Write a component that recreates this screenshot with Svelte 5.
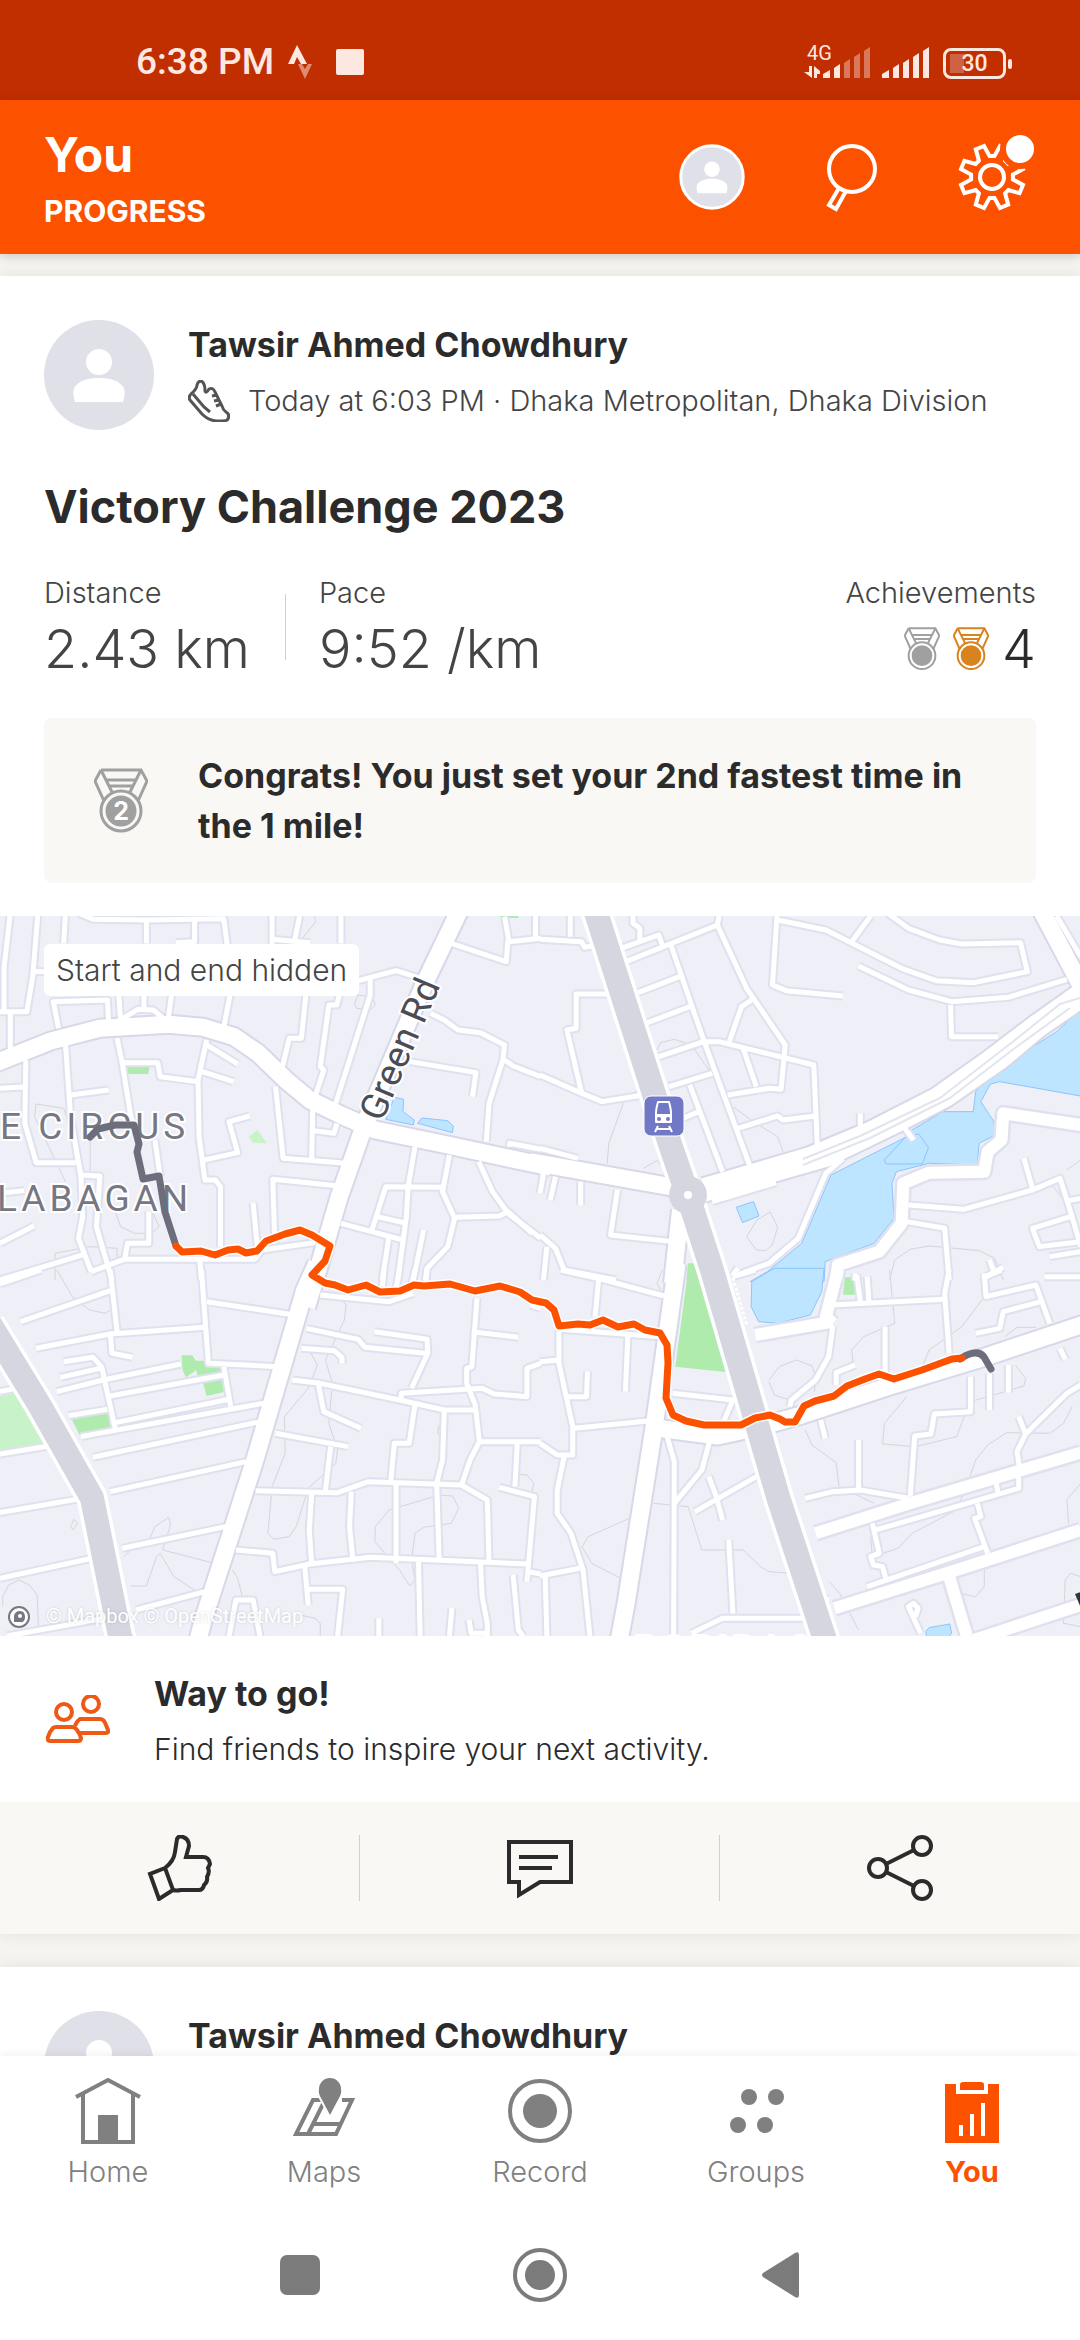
<script lang="ts">
    type Tile = {
        x: number;
        y: number;
        parks?: string[];
        pale?: string[];
        water?: string[];
        paths?: string[];
        minor: string[];
        street?: string[];
        main?: string[];
    };

    const athlete = "Tawsir Ahmed Chowdhury";

    const tabs = [
        { id: "home", label: "Home" },
        { id: "maps", label: "Maps" },
        { id: "record", label: "Record" },
        { id: "groups", label: "Groups" },
        { id: "you", label: "You" },
    ];
    let current = $state("you");

    // eight teeth around the hub
    const gear = Array.from({ length: 8 }, (_, i) => i * 45 + 22.5)
        .flatMap((a) => [[a - 16, 21], [a - 8, 32], [a + 8, 32], [a + 16, 21]])
        .map(([a, r]) => {
            const t = (a * Math.PI) / 180;
            return `${(38 + r * Math.cos(t)).toFixed(1)},${(38 + r * Math.sin(t)).toFixed(1)}`;
        })
        .join(" ");

    // each tile covers 540x370 map units and has its own finer grid
    const tiles: Tile[] = [
        {
            x: 0,
            y: -6,
            parks: ["M368 468H435L430 492H372Z", "M1450 14H1505V24H1455Z"],
            pale: ["M722 680L748 660 775 700 735 698Z"],
            water: [
                "M1120 628L1145 562 1172 568 1170 605 1203 630 1200 645Z",
                "M1213 640L1225 624 1300 632 1316 648 1314 668Z",
            ],
            paths: [
                "M105 582L185 595 200 640 M105 582L100 620 190 815",
                "M262 690V800 M330 890L350 950 390 970 440 970 462 950 440 900",
                "M160 1110V1030L260 1010 340 1015V1060",
                "M1030 280L1040 255 1080 262 1090 285 1075 300 1035 295Z",
                "M910 10L917 35 870 95",
            ],
            minor: [
                "M30 10L12 170V300", "M110 10L95 200 78 305H0", "M190 10L185 100", "M30 305V420", "M95 185H140",
                "M230 10L270 28 430 30 650 26 660 110", "M425 30V100", "M565 20V95L510 98", "M790 18V110",
                "M870 18L855 95 M790 88L900 98", "M990 18V100", "M170 355L155 275 312 270 315 330",
                "M345 255L350 330 400 298 445 300 480 330", "M418 255V298", "M498 255L488 330", "M668 255L650 350",
                "M888 255L875 385H840L820 470", "M985 255L978 285H955L930 470 940 480 915 560",
                "M1075 200V255L975 580", "M1030 215L1150 182 1220 205", "M1310 100L1470 155 1475 90",
                "M1465 20L1478 95 1570 85", "M1555 18V80", "M1250 310L1290 330 1330 360 1395 368 1465 405 1460 450 1420 580 1412 695",
                "M1465 450L1490 468 1570 500", "M1190 455L1382 488 1372 560", "M1480 710V700L1570 718",
                "M190 400L205 620 235 800 240 920 228 985 265 1085", "M340 385L355 460 380 620 400 670",
                "M355 458H458L465 500 575 515", "M600 390L575 510 578 680 595 810H625L640 830V1010",
                "M600 405L690 462", "M578 482L678 515", "M205 555L315 540", "M0 535L80 530",
                "M75 450L72 640 105 758H220", "M725 618L665 635 690 728 585 752", "M800 530L822 745 1005 760",
                "M908 600L905 745", "M910 662L970 670 978 640", "M985 828L792 808 798 1000",
                "M735 880L748 1020", "M228 795L290 798 280 950 325 1110", "M450 690L465 800", "M432 905V1000H370L362 1050",
                "M0 1000L98 948", "M0 1110L240 1035", "M265 1085L360 1048H740L760 1020 915 998", "M580 1050L585 1110",
                "M1205 710L1185 830 1180 920 1155 1110", "M1305 735L1285 845 1320 925 1300 1010 1240 1075 1235 1110",
                "M1080 960L1120 830 1285 832", "M1320 922L1450 918 1475 905 1545 970", "M1390 755L1430 845 1475 910 1570 985",
                "M990 940L1170 990", "M1095 920L1180 940", "M1130 975L1110 1110", "M1230 960L1200 1110", "M0 850L70 842",
            ],
            main: [
                "M-20 462L150 392 290 355 490 343 590 352 680 380 750 430 830 510 900 570 1000 620 1090 660 1300 705 1600 772",
                "M1335 0L1235 215 1060 640 985 860 920 1090 890 1190",
            ],
        },
        {
            x: 540,
            y: -6,
            parks: ["M430 1060H460L480 1110H425Z", "M885 1104H915V1112H885Z"],
            water: [
                "M1580 300L1555 312 1500 365 1310 490 1265 545 1258 605H1170L1080 660 1000 750 1005 762H1110L1128 712 1100 672 1065 680 845 795 760 1000 660 1085 610 1115 825 1115 828 1055 970 1000 1028 925 1022 820 1035 785 1130 760 1270 765 1275 700 1322 675 1318 635 1280 575 1308 522 1335 515 1580 560Z",
                "M570 892L620 875 636 918 588 938Z",
            ],
            paths: [
                "M340 420L350 398 390 388 440 405 490 480", "M290 535L245 570 200 700 195 760",
                "M560 590L620 635 690 680 706 725", "M630 930L668 906 690 950 675 1005 655 1022 628 1020 600 980 630 930",
                "M1015 1110L1030 1050 1075 1018 1130 1008 1275 1022 1320 1045 1345 1110", "M300 775L340 752 370 780",
                "M1500 800L1490 830 1530 880 M1570 750L1530 780",
            ],
            minor: [
                "M0 88L120 95 130 112 150 108", "M88 18V80", "M205 252H105V355L78 360 120 545", "M0 495L110 545 180 575 300 555",
                "M270 18V40L290 55V90", "M235 115L345 75 355 105", "M250 155L515 45 520 18",
                "M380 105L475 390 610 770", "M515 45L600 235 712 405 700 538 665 535 545 555",
                "M285 248L405 200", "M312 338L435 290", "M345 440L475 395 520 395 795 465 805 705",
                "M375 530L500 490", "M550 395L585 290 615 270", "M590 415L628 530", "M435 525L530 785", "M415 625L462 605",
                "M575 655L690 618 705 630 800 618", "M688 18L675 225 715 242 880 258", "M690 30L830 60 1050 175 1150 212 1260 218 1415 185 1395 98 1225 102 1160 90 1070 55 1010 10",
                "M905 95L960 18", "M925 168L1070 240 1195 275 1360 262 1530 208", "M1192 285L1195 380H1330",
                "M0 715L110 745", "M10 790L0 850", "M45 800L30 870", "M118 815V885", "M225 840L205 975 385 995",
                "M0 975L45 1015 70 1080 220 1110", "M20 1010L10 1110", "M500 875L685 818", "M630 800V830",
                "M880 745L830 790 750 985 665 1060 560 1100", "M930 610V650", "M1055 650L1085 690",
                "M1070 885L1230 898 1430 840 1510 805 1545 920 1570 1010", "M1405 745L1430 835", "M1065 935L1175 955 1188 1110",
                "M1540 920L1430 955 1450 1010 1570 995", "M1480 1040L1570 1025", "M1305 1050L1318 1085 M1345 1072L1285 1105",
                "M1535 872L1570 865", "M1500 18L1570 140", "M915 1090V1112", "M560 1095L575 1075",
            ],
            street: [
                "M1570 645L1345 610 1340 690 1300 725 1290 785 1130 788 1055 820 1050 940 985 1025 865 1065 860 1110",
            ],
            main: [
                "M-30 755L390 832",
                "M475 830L780 738 960 660 1150 560 1300 450 1440 340 1590 230",
                "M475 850L830 745 1040 640 1180 565 1340 450 1450 355 1590 255",
                "M1455 0L1550 185 1590 265",
                "M408 900L385 1120",
            ],
        },
        {
            x: 0,
            y: 354,
            parks: [
                "M208 448L315 425 320 478 232 496Z", "M527 256H558L568 272H600L605 290 640 290V312L575 325 570 300 540 322 530 300Z",
                "M590 340L645 330 650 366 600 378Z",
            ],
            pale: ["M0 378L72 366 150 515 0 540Z"],
            paths: [
                "M165 0L210 80 260 120 305 130 320 120", "M930 75H980L1005 105 1000 150 945 270 965 340 955 460 980 540 975 580 895 655 860 770 840 800 795 808 778 790 790 650 828 550 826 440 895 355 922 285 900 245",
                "M1260 680L1130 720 1090 770 1088 815 1160 900 1190 948 1205 930 1195 870 1205 790 1230 772 1310 760 1332 715 1315 678 1260 675",
                "M380 948H425L455 860 465 850 505 920 575 968", "M435 805L450 770 490 742 495 765 472 840 615 878", "M360 860L380 840",
                "M8 1010V980L25 945 55 930 85 945 108 975 112 1080", "M205 770L215 748 225 760 212 780Z", "M675 900L690 925 705 985",
                "M870 1035L915 1045 930 1060V1100", "M1275 465L1270 490 1280 500 M1500 612L1530 615 1550 640 1545 665",
            ],
            minor: [
                "M0 42L120 0", "M60 155L320 62", "M320 0L340 185 M320 185L325 250 385 262", "M585 0L605 280 810 290",
                "M600 95L855 135", "M105 235L320 192 595 172", "M0 365L70 350", "M165 365L300 330 525 282", "M320 378L650 315",
                "M185 275L270 262 295 290 335 478", "M175 322L290 295", "M200 437L312 418", "M335 458L665 388", "M650 290L670 410",
                "M235 500L775 398", "M270 562L755 455", "M0 552L160 525", "M320 665L715 575", "M0 728L240 685", "M355 835L655 770",
                "M0 925L280 862", "M395 1020L595 965", "M20 1098L330 1040", "M890 175L1040 208 1060 232 1235 250",
                "M1088 185L1240 208 1242 250 1195 355", "M875 235L970 242 993 262V280", "M848 330L930 340 1160 390 1290 420H1380",
                "M925 345L940 425 1048 475", "M800 490L1010 530", "M960 530L945 660", "M742 662L980 668 1070 635 1340 645",
                "M1385 85L1370 290 1355 295V340L1380 405 1392 515 1365 570 1340 645 1415 690 1420 880", "M1370 185L1505 202",
                "M1165 390V370L1400 355 1435 372 1530 380V295L1570 280", "M1205 405L1188 520H1145L1135 630", "M1290 425L1285 570 1268 640 1275 865",
                "M1392 515H1570", "M1502 520L1495 650", "M1450 652L1552 680 1530 935", "M1150 640V880", "M1020 665L1015 770 1025 875",
                "M905 670L898 780 905 880", "M685 840L792 850 798 905 900 882 1075 862 1530 882", "M1530 905L1570 912",
                "M885 890L895 1005", "M895 958H995L980 1100", "M1215 875L1220 1100", "M1395 880L1400 980 1415 1060V1100",
                "M1490 915L1505 1080 1520 1100", "M665 1100L685 990H735L755 1100", "M1100 1045V1100", "M1312 1015L1305 1100",
                "M1362 1050L1368 1090H1415", "M930 75L1130 95 1200 70 M1540 105L1570 115", "M1115 0L1110 50", "M1160 0L1150 55", "M1205 0L1195 45 M1240 0L1235 45",
            ],
            main: ["M920 -20L885 60 740 570 590 1050 570 1130"],
        },
        {
            x: 540,
            y: 354,
            parks: ["M430 0H470L510 110 560 308 393 290Z", "M885 22H915V74H880Z"],
            water: [
                "M680 -5L615 35 613 110 635 155 690 160 785 135 818 65 825 -5Z",
                "M1125 1110L1120 1085 1130 1073 1190 1062 1195 1090 1180 1110Z",
            ],
            paths: [
                "M665 330L695 290 745 270 790 288 800 320 797 365", "M665 335L680 375 720 388", "M1015 0L1030 160 940 200 905 240 910 290",
                "M1290 80L1225 170 1130 240 1110 290", "M1065 380L1000 460 995 522 1090 530 1210 500 1235 430",
                "M1380 285L1410 325 1405 348 1260 392", "M770 480L790 525 860 578 868 650", "M330 700L430 710 470 840H590L640 890 665 905 730 910",
                "M260 745L140 800 122 830 150 880 235 925", "M1245 630L1265 570 1300 525 1355 488 1480 490 1520 460 1545 410",
                "M960 800L965 860 1040 835 1080 790 1210 720 1245 630", "M840 935L870 970 925 1080", "M1290 900V950L1265 980 1225 972",
                "M1570 640L1530 690 1535 760", "M1570 920L1540 910 1525 930 1520 1060 1570 1070", "M1350 200L1385 172H1440",
                "M870 650L930 680 970 700", "M355 70L340 40 355 0 M425 40L465 15",
            ],
            minor: [
                "M60 0L180 28 360 78", "M170 30L160 140", "M55 180L55 280 95 470 95 555H50L0 520", "M70 560L50 660V730L90 790 125 900 145 1100",
                "M0 275L55 270", "M75 380H135L138 305", "M255 200L248 365", "M100 475L320 452", "M0 918L115 895", "M15 915L20 1100",
                "M60 178L350 200", "M385 370L560 390 535 450", "M365 485L390 575 388 1100", "M492 515L470 600 390 700",
                "M450 725L645 610", "M490 620L512 680 530 750", "M548 810L560 1030", "M440 1090L530 1045 770 1045",
                "M845 105L1175 88", "M920 15L930 95", "M950 20L955 95", "M1188 0L1175 70 1188 250", "M1002 170V310",
                "M850 170L838 260 800 330 730 390 725 410", "M915 285L860 308V345", "M1465 20H1570", "M1290 10L1295 80 1440 45 1480 160",
                "M1455 95L1345 125 1335 175 1265 190", "M1340 0L1290 22", "M1510 235L1525 268", "M1305 310V420", "M1360 285V368",
                "M1250 320V425L1145 432 1135 492 1088 498 1075 680", "M925 510V660", "M770 685L850 665 930 660 1070 685",
                "M1570 345L1530 370 1410 492 1385 545 1392 590 M1390 440L1410 492", "M815 450L828 505", "M975 780L1390 655V620", "M1325 640L1330 670",
                "M965 760L985 850 960 860 968 885 995 890 1005 930", "M1270 700L1280 740 1262 745 1300 850", "M950 950L1290 830",
                "M1105 1090L1070 1010 1085 1000 1098 1015 1090 1040", "M780 992L840 988", "M560 20L625 0",
            ],
            street: [
                "M625 195L850 155 M850 160L830 140 845 80 865 0",
                "M800 790L1080 698 1570 548", "M855 1015L1180 910 1570 780", "M1185 910L1240 1100", "M1260 1110L1570 1005",
            ],
            main: [
                "M398 -20L330 480 250 1000 230 1110",
                "M345 475L515 498 640 470 760 435 1010 350 1290 262 1600 155",
            ],
        },
    ];

    const trunk = ["M-10 408L40 490 92 582 120 720 128 740", "M594 -10L670 228 688 280 712 354 779 584 827 730"];

    const route =
        "M176 330L182 336 201 335 215 339 228 334 238 333 246 337 257 335 266 325 285 318 300 314 312 319 330 330 325 345 312 359 325 367 335 369 348 374 366 369 380 376 400 375 414 369 424 370 450 368 475 375 500 370 520 376 532 384 546 387 554 394 559 410 578 408 590 409 603 404 618 411 634 408 645 414 660 417 667 429 668 447 666 482 673 499 686 505 704 509 741 509 755 502 770 499 780 503 785 506 795 506 804 490 815 485 834 480 847 470 865 463 879 458 894 463 922 454 952 443 962 442";
</script>

{#snippet person()}
    <circle cx="55" cy="42" r="13" />
    <path d="M31 82C29 76 29 72 30 68C35 60 45 58 55 58S75 60 80 68C81 72 81 76 79 82Z" />
{/snippet}

{#snippet medal(place: string)}
    <svg class="medal" viewBox="0 0 54 66" aria-hidden="true">
        <path d="M7 2H47L53 13 44 33M7 2L1 13 10 33M7 2L18 24M47 2L36 24M12 12H42M15 18H39" />
        <circle cx="27" cy="43" r="20" />
        <circle class="disc" cx="27" cy="43" r="14" />
        {#if place}
            <text x="27" y="52" text-anchor="middle">{place}</text>
        {/if}
    </svg>
{/snippet}

{#snippet athleteRow(showMeta: boolean)}
    <div class="athlete">
        <svg class="avatar" viewBox="0 0 110 110" aria-hidden="true">
            <circle class="avatar-bg" cx="55" cy="55" r="55" />
            {@render person()}
        </svg>
        <div>
            <h2>{athlete}</h2>
            {#if showMeta}
                <p class="meta">
                    <svg viewBox="0 0 42 42" width="42" height="42" aria-hidden="true">
                        <path d="M13 1C16 2 17 6 17 11Q18 14 21 9Q25 7 27 12L34 26Q35 30 38 32Q42 34 40 39Q39 41 34 41H28Q20 40 14 34L2 20Q0 17 3 14Q9 9 9 5Q10 1 13 1Z" />
                        <path d="M5 14L16 27 22 32M24 16L29 15M26 21L31 20M28 26L33 24" />
                    </svg>
                    <span>Today at 6:03 PM · Dhaka Metropolitan, Dhaka Division</span>
                </p>
            {/if}
        </div>
    </div>
{/snippet}

<div class="screen">
    <div class="status">
        <div class="status-left">
            <span>6:38 PM</span>
            <svg viewBox="0 0 24 34" width="24" height="34" aria-hidden="true">
                <path d="M9 0L19 19H13L9 12 6 19H0Z" />
                <path opacity=".5" d="M10 19H14L17 24 20 19H24L17 34Z" />
            </svg>
            <i></i>
        </div>
        <div class="status-right">
            <div class="network">
                <span>4G</span>
                <svg viewBox="0 0 72 34" width="72" height="34" aria-hidden="true">
                    <path d="M6 20H9V32L1 26H6ZM11 32V20L17 25V28H14V32Z" />
                    <path d="M20 32V28L27 24V32ZM31 32V22L37 18V32Z" />
                    <path opacity=".4" d="M41 32V17L47 13V32ZM51 32V11L57 7V32ZM61 32V5L67 1V32Z" />
                </svg>
            </div>
            <svg viewBox="0 0 50 34" width="50" height="34" aria-hidden="true">
                <path d="M0 32V28L7 24V32ZM11 32V22L17 18V32ZM21 32V17L27 13V32ZM31 32V11L37 7V32ZM41 32V5L47 1V32Z" />
            </svg>
            <span class="battery">30</span>
        </div>
    </div>

    <header>
        <div class="heading">
            <h1>You</h1>
            <p>PROGRESS</p>
        </div>
        <button aria-label="Profile">
            <svg viewBox="0 0 110 110" width="66" height="66">
                <circle class="avatar-bg ring" cx="55" cy="55" r="52" />
                {@render person()}
            </svg>
        </button>
        <button aria-label="Search">
            <svg class="line" viewBox="0 0 66 66" width="66" height="66">
                <circle cx="33" cy="25" r="23" />
                <path d="M20 44L10 61 17 65 27 47" />
            </svg>
        </button>
        <button aria-label="Settings">
            <svg class="line" viewBox="0 0 76 76" width="76" height="76">
                <polygon points={gear} />
                <circle cx="38" cy="38" r="12" />
                <circle class="dot" cx="66" cy="10" r="17" />
            </svg>
        </button>
    </header>

    <main>
        <article>
            <section class="details">
                {@render athleteRow(true)}
                <h3>Victory Challenge 2023</h3>
                <div class="stats">
                    <div class="stat">
                        <span>Distance</span>
                        <strong>2.43 km</strong>
                    </div>
                    <div class="stat">
                        <span>Pace</span>
                        <strong>9:52 /km</strong>
                    </div>
                    <div class="stat achievements">
                        <span>Achievements</span>
                        <strong>
                            {@render medal("")}
                            <b>{@render medal("")}</b>
                            4
                        </strong>
                    </div>
                </div>
                <div class="congrats">
                    {@render medal("2")}
                    <p>Congrats! You just set your 2nd fastest time in the 1 mile!</p>
                </div>
            </section>

            <div class="map">
                <svg viewBox="0 0 1080 720" role="img" aria-label="Route map">
                    <rect class="land" width="1080" height="720" />
                    {#each tiles as tile}
                        <g transform="translate({tile.x} {tile.y}) scale(.3444 .3333)">
                            {#each tile.parks ?? [] as d}<path class="park" {d} />{/each}
                            {#each tile.pale ?? [] as d}<path class="pale" {d} />{/each}
                            {#each tile.water ?? [] as d}<path class="water" {d} />{/each}
                            {#each tile.paths ?? [] as d}<path class="footpath" {d} />{/each}
                        </g>
                    {/each}
                    {#each ["case", "fill"] as layer}
                        {#each tiles as tile}
                            <g class={layer} transform="translate({tile.x} {tile.y}) scale(.3444 .3333)">
                                {#each tile.minor as d}<path class="minor" {d} />{/each}
                                {#each tile.street ?? [] as d}<path class="street" {d} />{/each}
                                {#each tile.main ?? [] as d}<path class="main" {d} />{/each}
                            </g>
                        {/each}
                    {/each}
                    <path class="lane" d="M803 243L860 220 940 182 1010 128 1060 88 1080 82M803 249L870 222 950 182 1015 132 1070 92" />
                    {#each trunk as d}<path class="trunk-edge" {d} />{/each}
                    <circle class="island" cx="688" cy="279" r="19" />
                    {#each trunk as d}<path class="trunk" {d} />{/each}
                    <circle cx="688" cy="279" r="4" fill="#fff" />
                    <path class="lane-mark" d="M733 362L747 410" />

                    <g class="area">
                        <text x="0" y="223">E CIRCUS</text>
                        <text x="-3" y="295">LABAGAN</text>
                        <text x="634" y="746">POBIBAG</text>
                    </g>
                    <text class="road-name" transform="translate(382 207) rotate(-67)">Green Rd</text>
                    <path d="M1075 678L1081 676V692Z" fill="#333" />

                    <path class="halo" d={route} />
                    <path class="hidden-route" d="M90 221L98 213 115 209 134 209 139 228 137 236 143 263 159 260 165 296 176 330" />
                    <path class="hidden-route" d="M960 443Q977 432 984 441L991 453" />
                    <path class="route" d={route} />

                    <g transform="translate(644 180)">
                        <rect class="station" width="40" height="40" rx="7" />
                        <path d="M12 26V17Q12 13 14 6H25Q27 13 27 17V26ZM14 30L11 36M25 30L28 36M13 33H26" fill="none" stroke="#fff" stroke-width="2" />
                        <path d="M12 18H27V26H12Z" fill="#fff" />
                        <circle cx="15" cy="23" r="2" fill="#7179c6" />
                        <circle cx="24" cy="23" r="2" fill="#7179c6" />
                    </g>

                    <circle cx="19" cy="701" r="10" fill="#fff" stroke="#777780" stroke-width="2" />
                    <path d="M14 706V700Q15 695 20 695T25 701 20 706Z" fill="#777780" />
                    <circle cx="20" cy="700" r="2" fill="#fff" />
                    <text class="credit" x="46" y="707">© Mapbox © OpenStreetMap</text>
                </svg>
                <span class="privacy">Start and end hidden</span>
            </div>

            <section class="cheer">
                <svg viewBox="0 0 64 48" width="64" height="48" aria-hidden="true">
                    <circle cx="18" cy="17" r="8" />
                    <circle cx="45" cy="9" r="8" />
                    <path d="M10 32H26Q29 32 31 35Q34 39 35 43Q35 46 32 46H4Q1 46 2 42Q4 36 7 33Q8 32 10 32Z" />
                    <path d="M29 31Q30 27 34 24H54Q58 24 60 30L62 35Q63 38 59 38H33" />
                </svg>
                <div>
                    <h2>Way to go!</h2>
                    <p>Find friends to inspire your next activity.</p>
                </div>
            </section>

            <div class="actions">
                <button aria-label="Give kudos">
                    <svg viewBox="0 0 66 66" width="66" height="66">
                        <path d="M18 33Q27 26 28 17L30 4Q32 0 36 2Q42 4 42 11L39 22H56Q62 22 63 29L61 33Q63 37 60 42Q61 47 57 50Q56 55 52 55H34Q29 56 26 55ZM18 33L3 39 12 64 26 55" />
                    </svg>
                </button>
                <button aria-label="Comment">
                    <svg viewBox="0 0 66 66" width="66" height="66">
                        <path d="M2 7H64V47H33L12 60V47H2ZM12 22H51M12 33H45" />
                    </svg>
                </button>
                <button aria-label="Share">
                    <svg viewBox="0 0 66 66" width="66" height="66">
                        <circle cx="11" cy="33" r="9" />
                        <circle cx="55" cy="11" r="9" />
                        <circle cx="55" cy="55" r="9" />
                        <path d="M19 29L47 15M19 37L47 51" />
                    </svg>
                </button>
            </div>
        </article>

        <article>
            <section class="details">
                {@render athleteRow(false)}
            </section>
        </article>
    </main>

    <nav>
        {#each tabs as tab}
            <button class:current={current === tab.id} onclick={() => (current = tab.id)}>
                <svg viewBox="0 0 66 66" width="66" height="66" aria-hidden="true">
                    {#if tab.id === "home"}
                        <path class="outline" d="M1 19L33 2 65 19M8 16V64H58V16" />
                        <path d="M23 37H43V64H23Z" />
                    {:else if tab.id === "maps"}
                        <path class="outline" d="M30 22H22L5 56H45L61 22H51M33 24L17 56M23 46H49" />
                        <path class="pin" d="M39 37L30 20Q27 15 28 11A11 11 0 0 1 50 11Q51 15 48 20Z" />
                    {:else if tab.id === "record"}
                        <circle class="outline" cx="33" cy="33" r="30" />
                        <circle cx="33" cy="33" r="17" />
                    {:else if tab.id === "groups"}
                        <circle cx="26" cy="19" r="8" />
                        <circle cx="53" cy="19" r="8" />
                        <circle cx="15" cy="47" r="8" />
                        <circle cx="42" cy="47" r="8" />
                    {:else}
                        <path d="M6 6H17V16H49V6H60V65H6ZM21 12V7Q21 4 24 4H42Q45 4 45 7V12Z" />
                        <path class="bars" d="M22 58V47M33 58V36M44 58V25" />
                    {/if}
                </svg>
                <span>{tab.label}</span>
            </button>
        {/each}
    </nav>

    <div class="system">
        <button aria-label="Recent apps">
            <svg viewBox="0 0 56 56" width="56" height="56"><rect x="8" y="8" width="40" height="40" rx="7" /></svg>
        </button>
        <button aria-label="Home screen">
            <svg viewBox="0 0 56 56" width="56" height="56">
                <circle class="outline" cx="28" cy="28" r="25" />
                <circle cx="28" cy="28" r="15" />
            </svg>
        </button>
        <button aria-label="Back">
            <svg viewBox="0 0 56 56" width="56" height="56"><path d="M11 26L43 6Q47 4 47 8V48Q47 52 43 50L11 30Q9 28 11 26Z" /></svg>
        </button>
    </div>
</div>

<style>
    :global(body) {
        margin: 0;
        background: #fff;
    }

    .screen {
        display: flex;
        flex-direction: column;
        height: 100vh;
        overflow: hidden;
        color: #2b2b2b;
        font-family: Inter, "Liberation Sans", sans-serif;
        font-weight: 300;
    }

    h1, h2, h3, p {
        margin: 0;
    }

    svg {
        display: block;
        flex: none;
    }

    button {
        display: flex;
        align-items: center;
        justify-content: center;
        padding: 0;
        border: 0;
        background: none;
        color: inherit;
        font: inherit;
        cursor: pointer;
    }

    .status {
        display: flex;
        justify-content: space-between;
        align-items: flex-end;
        flex: none;
        box-sizing: border-box;
        height: 100px;
        padding: 0 68px 20px 136px;
        background: #c12e00;
        color: #fce8e1;
        font-family: Roboto, sans-serif;
    }

    .status svg {
        fill: currentColor;
    }

    .status-left {
        display: flex;
        align-items: center;
        gap: 14px;
        font-size: 37px;
        font-weight: 500;
        line-height: 36px;
    }

    .status-left i {
        width: 28px;
        height: 26px;
        margin-left: 10px;
        border-radius: 2px;
        background: currentColor;
    }

    .status-right {
        display: flex;
        align-items: center;
        font-weight: 400;
    }

    .network {
        position: relative;
        margin-right: 7px;
    }

    .network span {
        position: absolute;
        top: -4px;
        left: 4px;
        font-size: 20px;
        line-height: 22px;
    }

    .battery {
        position: relative;
        box-sizing: border-box;
        width: 63px;
        height: 31px;
        margin: 0 6px 0 11px;
        border: 3px solid currentColor;
        border-radius: 8px;
        background: linear-gradient(#cf6243, #cf6243) 4px 3px / 14px 19px no-repeat;
        font-size: 23px;
        font-weight: 500;
        line-height: 26px;
        text-align: center;
    }

    .battery::after {
        content: "";
        position: absolute;
        top: 8px;
        right: -9px;
        width: 4px;
        height: 10px;
        border-radius: 2px;
        background: currentColor;
    }

    header {
        position: relative;
        display: flex;
        align-items: center;
        flex: none;
        height: 154px;
        padding: 0 18px 0 44px;
        background: #fc5200;
        box-shadow: 0 2px 10px rgba(0, 0, 0, 0.2);
        color: #fff;
    }

    header button {
        width: 140px;
        height: 100px;
    }

    header svg {
        overflow: visible;
        fill: #fff;
    }

    header .line {
        fill: none;
        stroke: #fff;
        stroke-width: 4;
    }

    header .dot {
        fill: #fff;
        stroke: #fc5200;
        stroke-width: 6;
    }

    .heading {
        flex: 1;
        padding-top: 8px;
    }

    h1 {
        font-size: 48px;
        line-height: 60px;
    }

    .heading p {
        font-size: 30px;
        font-weight: 700;
        line-height: 52px;
    }

    .avatar-bg {
        fill: #dfe0e8;
    }

    .ring {
        stroke: #fff;
        stroke-width: 5;
    }

    main {
        flex: 1;
        min-height: 0;
        overflow: hidden;
        padding-top: 22px;
        background: #f5f4f0;
    }

    article {
        margin-bottom: 33px;
        background: #fff;
        box-shadow: 0 0 14px rgba(80, 70, 40, 0.1);
    }

    .details {
        padding: 44px 44px 33px;
    }

    .athlete {
        display: flex;
        gap: 34px;
    }

    .avatar {
        width: 110px;
        height: 110px;
        fill: #fff;
    }

    h2 {
        font-size: 34px;
        font-weight: 700;
        line-height: 50px;
    }

    .meta {
        display: flex;
        align-items: center;
        gap: 18px;
        margin-top: 8px;
        color: #444;
        font-size: 29px;
        line-height: 46px;
    }

    .meta svg {
        fill: none;
        stroke: #555;
        stroke-width: 3;
    }

    h3 {
        margin-top: 44px;
        font-size: 45px;
        font-weight: 700;
        line-height: 66px;
    }

    .stats {
        display: flex;
        margin-top: 32px;
    }

    .stat {
        position: relative;
        color: #444;
    }

    .stat + .stat {
        margin-left: 69px;
    }

    .stat:nth-child(2)::before {
        content: "";
        position: absolute;
        top: 22px;
        left: -34px;
        width: 1px;
        height: 66px;
        background: #d0d0d0;
    }

    .stat span {
        display: block;
        font-size: 29px;
        line-height: 42px;
    }

    .stat strong {
        display: flex;
        align-items: center;
        gap: 13px;
        font-size: 54px;
        font-weight: 300;
        line-height: 70px;
    }

    .stats .achievements {
        margin-left: auto;
    }

    .achievements strong {
        justify-content: flex-end;
        color: #2b2b2b;
    }

    .medal {
        width: 36px;
        height: 44px;
        color: #a0a0a0;
        fill: none;
        stroke: currentColor;
        stroke-width: 3;
    }

    .medal .disc {
        fill: currentColor;
    }

    .medal text {
        fill: #fff;
        stroke: none;
        font-size: 25px;
        font-weight: 700;
    }

    b .medal {
        color: #d9831f;
    }

    .congrats {
        display: flex;
        align-items: center;
        gap: 50px;
        margin-top: 34px;
        padding: 33px 50px 32px;
        border-radius: 8px;
        background: #f9f8f5;
    }

    .congrats .medal {
        width: 54px;
        height: 66px;
    }

    .congrats p {
        font-size: 34px;
        font-weight: 700;
        line-height: 50px;
    }

    .map {
        position: relative;
    }

    .map svg {
        width: 100%;
        height: auto;
    }

    .map path {
        vector-effect: non-scaling-stroke;
        stroke-linejoin: round;
    }

    .privacy {
        position: absolute;
        top: 28px;
        left: 44px;
        padding: 6px 12px;
        border-radius: 6px;
        background: #fff;
        color: #444;
        font-size: 30px;
        line-height: 40px;
    }

    .land { fill: #eeeff7; }
    .park { fill: #aeebac; }
    .pale { fill: #c8f3c8; }
    .water { fill: #bde5ff; stroke: #8cc4ff; stroke-width: 1; }
    .footpath { fill: none; stroke: #d3d6db; stroke-width: 1; }
    .case path { fill: none; stroke: #dfe1ee; }
    .fill path { fill: none; stroke: #fff; }
    .case .minor { stroke-width: 9; }
    .fill .minor { stroke-width: 5; }
    .case .street { stroke-width: 17; }
    .fill .street { stroke-width: 12; }
    .case .main { stroke: #d7d8e8; stroke-width: 21; }
    .fill .main { stroke-width: 17; }
    .lane { fill: none; stroke: #e2e5ee; stroke-width: 2; }
    .lane-mark { fill: none; stroke: #fff; stroke-width: 3; stroke-dasharray: 3 2; }
    .trunk-edge { fill: none; stroke: #fff; stroke-width: 31; }
    .trunk { fill: none; stroke: #d5d6df; stroke-width: 24; }
    .island { fill: #d5d6df; }
    .station { fill: #7179c6; stroke: #fff; stroke-width: 1; }

    .route,
    .halo,
    .hidden-route {
        fill: none;
        stroke: #fc5200;
        stroke-width: 7;
        stroke-linecap: round;
    }

    .halo {
        stroke: #fff;
        stroke-width: 10;
    }

    .hidden-route {
        stroke: #6d6e7b;
    }

    .area text,
    .road-name {
        fill: #767783;
        stroke: #fff;
        stroke-width: 4;
        paint-order: stroke;
        font-family: Roboto, sans-serif;
        font-size: 37px;
        font-weight: 400;
    }

    .area text {
        letter-spacing: 4px;
    }

    .road-name {
        fill: #4b4c55;
    }

    .credit {
        fill: #fff;
        font-family: Roboto, sans-serif;
        font-size: 20px;
        font-weight: 400;
        text-shadow: 0 0 3px rgba(0, 0, 0, 0.15);
    }

    .cheer {
        display: flex;
        align-items: center;
        gap: 44px;
        padding: 33px 46px;
    }

    .cheer svg {
        fill: none;
        stroke: #ee5a15;
        stroke-width: 4;
    }

    .cheer p {
        margin-top: 10px;
        font-size: 30px;
        line-height: 40px;
    }

    .actions {
        display: flex;
        background: #f9f8f5;
    }

    .actions button {
        flex: 1;
        margin: 33px 0;
    }

    .actions button + button {
        box-shadow: -1px 0 #d0d0d0;
    }

    .actions svg {
        fill: none;
        stroke: #2b2b2b;
        stroke-width: 4;
    }

    nav {
        position: relative;
        display: flex;
        flex: none;
        padding: 22px 0 31px;
        background: #fff;
        box-shadow: 0 -2px 8px rgba(0, 0, 0, 0.06);
        color: #808080;
    }

    nav button {
        flex: 1;
        flex-direction: column;
        gap: 8px;
        font-size: 29px;
        line-height: 40px;
    }

    nav svg,
    .system svg {
        fill: currentColor;
    }

    .outline {
        fill: none;
        stroke: currentColor;
        stroke-width: 4;
    }

    .pin {
        stroke: #fff;
        stroke-width: 4;
        paint-order: stroke;
    }

    .bars {
        stroke: #fff;
        stroke-width: 4;
    }

    nav .current {
        color: #fc5200;
        font-weight: 700;
    }

    .system {
        position: relative;
        display: flex;
        justify-content: center;
        flex: none;
        height: 117px;
        background: #fff;
        color: #7b7b7b;
    }

    .system button {
        width: 240px;
        height: 104px;
    }
</style>
